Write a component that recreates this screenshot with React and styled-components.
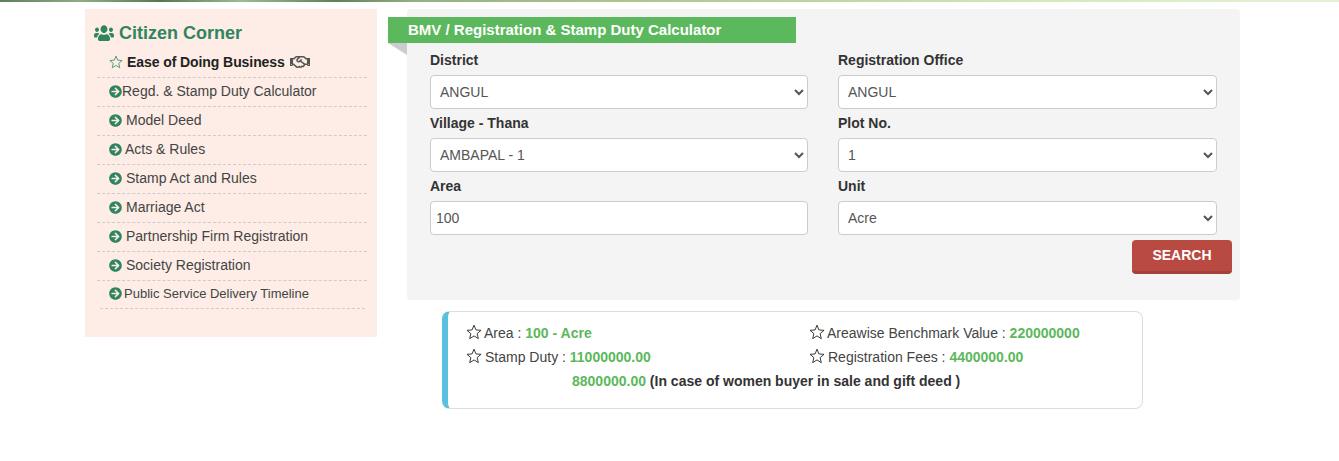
import React from "react";
import styled, { createGlobalStyle } from "styled-components";
import { FaUsers, FaArrowCircleRight, FaRegHandshake } from "react-icons/fa";

const GlobalStyle = createGlobalStyle`
  body {
    margin: 0;
    background: #fff;
    font-family: "Liberation Sans", Arial, sans-serif;
    font-size: 14px;
    color: #333;
  }
`;

const TopStrip = styled.div`
  height: 2px;
  background: linear-gradient(
    90deg,
    #5d7f5a 0%,
    #8fae88 6%,
    #56774f 12%,
    #9dbb92 18%,
    #5f8159 25%,
    #93b086 31%,
    #a9c58a 45%,
    #bcd59c 60%,
    #d6e8bd 78%,
    #e6f2d8 100%
  );
`;

const Page = styled.div`
  display: flex;
  align-items: flex-start;
  gap: 30px;
  padding: 7px 0 0 85px;
`;

const Sidebar = styled.aside`
  width: 292px;
  height: 328px;
  box-sizing: border-box;
  background: #fdede6;
  padding: 11px 10px 0 9px;
`;

const SideTitle = styled.h3`
  display: flex;
  align-items: center;
  gap: 5px;
  margin: 0;
  height: 26px;
  font-size: 18px;
  font-weight: bold;
  color: #2e8560;
  svg {
    width: 20px;
    height: 18px;
  }
`;

const SideList = styled.ul`
  list-style: none;
  margin: 0;
  padding: 0 0 0 3px;
`;

const SideItem = styled.li`
  display: flex;
  align-items: center;
  box-sizing: border-box;
  gap: ${({ $gap }) => $gap ?? 4}px;
  height: 29px;
  padding: 0 0 2px 12px;
  border-bottom: 1px dashed #ccc;
  color: #444;
  font-size: 14px;
`;

const LeadItem = styled(SideItem)`
  height: 32px;
  padding: 1px 0 0 12px;
  color: #222;
  font-weight: bold;
  letter-spacing: -0.08px;
`;

const LastItem = styled(SideItem)`
  height: 28px;
  margin: 0 2px 0 3px;
  padding: 0 0 3px 9px;
  font-size: 13px;
`;

const GreenArrow = styled(FaArrowCircleRight)`
  width: 13px;
  height: 13px;
  color: #2e8560;
  flex: none;
`;

const StarSvg = styled.svg`
  width: ${({ $dark }) => ($dark ? 16 : 14)}px;
  height: ${({ $dark }) => ($dark ? 16 : 14)}px;
  margin-top: ${({ $dark }) => ($dark ? -2 : 0)}px;
  margin-right: ${({ $dark }) => ($dark ? -1 : -1)}px;
  fill: none;
  stroke: ${({ $dark }) => ($dark ? "#333" : "#3f8f6a")};
  stroke-width: 1.2;
  stroke-linejoin: miter;
  flex: none;
`;

const OutlineStar = ({ $dark }) => (
  <StarSvg $dark={$dark} viewBox="0 0 20 20">
    <polygon points="10,1.5 12.4,7.4 18.8,7.9 13.9,12 15.4,18.3 10,14.9 4.6,18.3 6.1,12 1.2,7.9 7.6,7.4" />
  </StarSvg>
);

const Main = styled.main`
  width: 833px;
`;

const Panel = styled.section`
  height: 290px;
  box-sizing: border-box;
  padding-top: 8px;
  background: #f4f4f4;
  border-radius: 4px;
  box-shadow: 0 1px 1px rgba(0, 0, 0, 0.05);
`;

const Ribbon = styled.h4`
  position: relative;
  box-sizing: border-box;
  width: 408px;
  height: 26px;
  margin: 0 0 0 -19px;
  padding-left: 20px;
  background: #5cb85c;
  color: #fff;
  font-size: 15px;
  font-weight: bold;
  line-height: 26px;
  &::after {
    content: "";
    position: absolute;
    left: 0;
    top: 26px;
    border-top: 12px solid #ccc;
    border-left: 19px solid transparent;
  }
`;

const FormGrid = styled.form`
  display: grid;
  grid-template-columns: 378px 379px;
  column-gap: 30px;
  row-gap: 4px;
  margin: 7px 0 0 23px;
`;

const Field = styled.div`
  display: flex;
  flex-direction: column;
  gap: 5px;
`;

const Label = styled.label`
  font-weight: bold;
  line-height: 20px;
  color: #333;
`;

const controlCss = `
  box-sizing: border-box;
  width: 100%;
  height: 34px;
  background: #fff;
  border: 1px solid #ccc;
  border-radius: 4px;
  color: #555;
  font-family: inherit;
  font-size: 14px;
`;

const Select = styled.select`
  ${controlCss}
  padding: 0 5px;
`;

const Input = styled.input`
  ${controlCss}
  padding: 0 5px;
`;

const ButtonRow = styled.div`
  display: flex;
  justify-content: flex-end;
  margin: 5px 8px 0 0;
`;

const SearchButton = styled.button`
  width: 100px;
  height: 34px;
  padding: 0 0 2px;
  background: #b94a42;
  border: 0;
  border-bottom: 3px solid #a5413a;
  border-radius: 4px;
  color: #fff;
  font-family: inherit;
  font-size: 14px;
  font-weight: bold;
`;

const ResultCard = styled.div`
  box-sizing: border-box;
  width: 701px;
  height: 98px;
  margin: 12px 0 0 35px;
  padding: 9px 0 0 18px;
  background: #fff;
  border: 1px solid #ddd;
  border-left: 6px solid #5bc0de;
  border-radius: 8px;
`;

const ResultGrid = styled.div`
  display: grid;
  grid-template-columns: 343px 1fr;
`;

const ResultCell = styled.div`
  display: flex;
  align-items: center;
  gap: ${({ $gap }) => $gap}px;
  height: 24px;
  color: #444;
`;

const Value = styled.b`
  color: #5cb85c;
  white-space: pre;
`;

const WomenNote = styled.div`
  height: 24px;
  line-height: 24px;
  padding-left: 106px;
  font-weight: bold;
  color: #333;
`;

const links = [
  { text: "Regd. & Stamp Duty Calculator", gap: 0 },
  { text: "Model Deed" },
  { text: "Acts & Rules", gap: 3 },
  { text: "Stamp Act and Rules" },
  { text: "Marriage Act" },
  { text: "Partnership Firm Registration" },
  { text: "Society Registration" },
];

const results = [
  { label: "Area : ", value: "100 - Acre", gap: 3 },
  { label: "Areawise Benchmark Value : ", value: "220000000", gap: 3 },
  { label: "Stamp Duty : ", value: "11000000.00", gap: 4 },
  { label: "Registration Fees : ", value: "4400000.00", gap: 4 },
];

const App = () => (
  <>
    <GlobalStyle />
    <TopStrip />
    <Page>
      <Sidebar>
        <SideTitle>
          <FaUsers preserveAspectRatio="none" />
          Citizen Corner
        </SideTitle>
        <SideList>
          <LeadItem $gap={5}>
            <OutlineStar />
            Ease of Doing Business
            <FaRegHandshake size={20} color="#555" />
          </LeadItem>
          {links.map((link) => (
            <SideItem key={link.text} $gap={link.gap}>
              <GreenArrow />
              {link.text}
            </SideItem>
          ))}
          <LastItem $gap={2}>
            <GreenArrow />
            Public Service Delivery Timeline
          </LastItem>
        </SideList>
      </Sidebar>
      <Main>
        <Panel>
          <Ribbon>BMV / Registration &amp; Stamp Duty Calculator</Ribbon>
          <FormGrid>
            <Field>
              <Label>District</Label>
              <Select defaultValue="ANGUL">
                <option>ANGUL</option>
              </Select>
            </Field>
            <Field>
              <Label>Registration Office</Label>
              <Select defaultValue="ANGUL">
                <option>ANGUL</option>
              </Select>
            </Field>
            <Field>
              <Label>Village - Thana</Label>
              <Select defaultValue="AMBAPAL - 1">
                <option>AMBAPAL - 1</option>
              </Select>
            </Field>
            <Field>
              <Label>Plot No.</Label>
              <Select defaultValue="1">
                <option>1</option>
              </Select>
            </Field>
            <Field>
              <Label>Area</Label>
              <Input defaultValue="100" />
            </Field>
            <Field>
              <Label>Unit</Label>
              <Select defaultValue="Acre">
                <option>Acre</option>
              </Select>
            </Field>
          </FormGrid>
          <ButtonRow>
            <SearchButton type="button">SEARCH</SearchButton>
          </ButtonRow>
        </Panel>
        <ResultCard>
          <ResultGrid>
            {results.map((row) => (
              <ResultCell key={row.label} $gap={row.gap}>
                <OutlineStar $dark />
                <span>
                  {row.label}
                  <Value>{row.value}</Value>
                </span>
              </ResultCell>
            ))}
          </ResultGrid>
          <WomenNote>
            <Value>8800000.00</Value> (In case of women buyer in sale and gift deed )
          </WomenNote>
        </ResultCard>
      </Main>
    </Page>
  </>
);

export default App;
